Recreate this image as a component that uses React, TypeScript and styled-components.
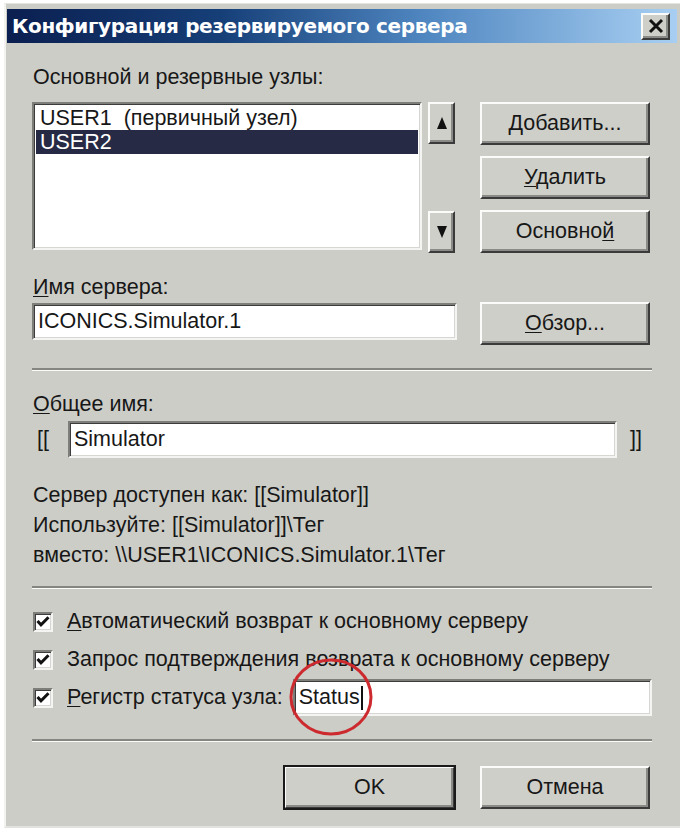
import React from "react";
import styled, { createGlobalStyle, css } from "styled-components";

const FONT = `"Liberation Sans", Arial, sans-serif`;
const TEXT = "21.5px";

const Global = createGlobalStyle`
  html, body { margin: 0; padding: 0; background: #ffffff; }
  body { font-family: ${FONT}; color: #171717; }
  * { box-sizing: border-box; }
`;

const Window = styled.div`
  position: relative;
  margin: 3px 0 0 4px;
  width: 676px;
  height: 825px;
  background: #cdcdc7;
  border-top: 1px solid #e4e4e0;
  border-left: 2px solid #f2f2ef;
  border-bottom: 2px solid #e2e2de;
  padding: 5px 3px 0 1px;
  display: flex;
  flex-direction: column;
`;

const TitleBar = styled.div`
  height: 34px;
  display: flex;
  align-items: center;
  justify-content: space-between;
  padding: 0 7px 0 5px;
  background: linear-gradient(90deg, #0b1f50 0%, #163f78 32%, #4f86c0 62%, #a8cff2 100%);
`;

const Title = styled.span`
  font-family: "DejaVu Sans", Verdana, sans-serif;
  font-weight: bold;
  font-size: 20px;
  color: #ffffff;
  letter-spacing: -0.35px;
  white-space: nowrap;
`;

const raised = css`
  background: #cfcfc9;
  border-style: solid;
  border-width: 2px;
  border-color: #fbfbf9 #3b3b3b #3b3b3b #fbfbf9;
  box-shadow: inset -2px -2px 0 #8a8a86;
`;

const sunken = css`
  background: #ffffff;
  border-style: solid;
  border-width: 2px;
  border-color: #7d7d7a #f4f4f2 #f4f4f2 #7d7d7a;
  box-shadow: inset 1px 1px 0 #3c3c3c, inset -1px -1px 0 #d6d6d2;
`;

const CloseButton = styled.div`
  ${raised};
  width: 29px;
  height: 27px;
  display: flex;
  align-items: center;
  justify-content: center;
`;

const Body = styled.div`
  display: flex;
  flex-direction: column;
  padding: 0 25px;
`;

const Label = styled.div<{ $mt: number }>`
  margin-top: ${(p) => p.$mt}px;
  height: 22px;
  line-height: 22px;
  font-size: ${TEXT};
  white-space: nowrap;
  padding-left: 1px;
`;

const U = styled.span`
  text-decoration: underline;
  text-underline-offset: 2px;
  text-decoration-thickness: 1px;
`;

const ListRow = styled.div`
  margin-top: 14px;
  height: 151px;
  display: flex;
  align-items: flex-start;
`;

const ListBox = styled.div`
  ${sunken};
  width: 390px;
  height: 148px;
  padding: 2px 2px;
  display: flex;
  flex-direction: column;
`;

const ListItem = styled.div<{ $selected?: boolean }>`
  height: 24px;
  line-height: 24px;
  font-size: ${TEXT};
  padding-left: 4px;
  white-space: nowrap;
  color: ${(p) => (p.$selected ? "#ffffff" : "#171717")};
  background: ${(p) => (p.$selected ? "#262a45" : "transparent")};
`;

const ScrollColumn = styled.div`
  margin-left: 6px;
  height: 151px;
  width: 27px;
  display: flex;
  flex-direction: column;
  justify-content: space-between;
`;

const ScrollButton = styled.div`
  ${raised};
  width: 27px;
  height: 42px;
  display: flex;
  align-items: center;
  justify-content: center;
`;

const ButtonColumn = styled.div`
  margin-left: 25px;
  height: 151px;
  display: flex;
  flex-direction: column;
  justify-content: space-between;
`;

const Button = styled.div<{ $default?: boolean; $w?: number; $ml?: number }>`
  ${raised};
  width: ${(p) => p.$w ?? 170}px;
  height: 43px;
  margin-left: ${(p) => p.$ml ?? 0}px;
  display: flex;
  align-items: center;
  justify-content: center;
  font-size: ${TEXT};
  white-space: nowrap;
  ${(p) =>
    p.$default &&
    css`
      outline: 2px solid #1a1a1a;
      outline-offset: -1px;
    `}
`;

const Row = styled.div<{ $mt: number; $h: number }>`
  margin-top: ${(p) => p.$mt}px;
  height: ${(p) => p.$h}px;
  display: flex;
  align-items: flex-start;
`;

const TextField = styled.div<{ $w?: number; $mt?: number; $ml?: number }>`
  ${sunken};
  ${(p) => (p.$w ? `width: ${p.$w}px;` : "flex: 1;")}
  height: 37px;
  margin-top: ${(p) => p.$mt ?? 0}px;
  margin-left: ${(p) => p.$ml ?? 0}px;
  padding-left: 4px;
  display: flex;
  align-items: center;
  font-size: ${TEXT};
  white-space: nowrap;
`;

const Separator = styled.div<{ $mt: number }>`
  margin-top: ${(p) => p.$mt}px;
  height: 3px;
  border-top: 2px solid #858582;
  border-bottom: 1px solid #fbfbf9;
`;

const Bracket = styled.span<{ $ml: number; $w: number }>`
  margin-left: ${(p) => p.$ml}px;
  width: ${(p) => p.$w}px;
  height: 37px;
  line-height: 37px;
  font-size: ${TEXT};
`;

const Info = styled.div`
  margin-top: 22px;
  display: flex;
  flex-direction: column;
`;

const InfoLine = styled.div`
  height: 30px;
  line-height: 30px;
  font-size: ${TEXT};
  white-space: nowrap;
  padding-left: 1px;
`;

const CheckRow = styled.div<{ $mt: number }>`
  margin-top: ${(p) => p.$mt}px;
  height: 37px;
  display: flex;
  align-items: center;
`;

const CheckBox = styled.div`
  ${sunken};
  margin-left: 1px;
  width: 20px;
  height: 20px;
  display: flex;
  align-items: center;
  justify-content: center;
`;

const CheckLabel = styled.span`
  margin-left: 14px;
  font-size: ${TEXT};
  white-space: nowrap;
`;

const Caret = styled.span`
  display: inline-block;
  width: 2px;
  height: 24px;
  margin-left: 1px;
  background: #111;
`;

const ButtonRow = styled.div`
  margin-top: 24px;
  display: flex;
  justify-content: flex-end;
  gap: 25px;
  padding-right: 2px;
`;

const Annotation = styled.svg`
  position: absolute;
  left: 274px;
  top: 648px;
  width: 110px;
  height: 90px;
  pointer-events: none;
`;

const Check = () => (
  <svg width="14" height="14" viewBox="0 0 14 14">
    <path d="M1.5 6 L5 9.8 L12.5 2.3" fill="none" stroke="#111" strokeWidth="3" />
  </svg>
);

const ArrowUp = () => (
  <svg width="12" height="14" viewBox="0 0 12 14">
    <path d="M6 1 L11 13 L1 13 Z" fill="#111" />
  </svg>
);

const ArrowDown = () => (
  <svg width="12" height="14" viewBox="0 0 12 14">
    <path d="M1 1 L11 1 L6 13 Z" fill="#111" />
  </svg>
);

const CloseIcon = () => (
  <svg width="16" height="16" viewBox="0 0 16 16">
    <path d="M2 2 L14 14 M14 2 L2 14" stroke="#111" strokeWidth="3" />
  </svg>
);

export default function App() {
  return (
    <>
      <Global />
      <Window>
        <TitleBar>
          <Title>Конфигурация резервируемого сервера</Title>
          <CloseButton>
            <CloseIcon />
          </CloseButton>
        </TitleBar>
        <Body>
          <Label $mt={23}>Основной и резервные узлы:</Label>
          <ListRow>
            <ListBox>
              <ListItem>USER1&nbsp; (первичный узел)</ListItem>
              <ListItem $selected>USER2</ListItem>
            </ListBox>
            <ScrollColumn>
              <ScrollButton>
                <ArrowUp />
              </ScrollButton>
              <ScrollButton>
                <ArrowDown />
              </ScrollButton>
            </ScrollColumn>
            <ButtonColumn>
              <Button>
                <span>
                  <U>Д</U>обавить...
                </span>
              </Button>
              <Button>
                <span>
                  <U>У</U>далить
                </span>
              </Button>
              <Button>
                <span>
                  Основно<U>й</U>
                </span>
              </Button>
            </ButtonColumn>
          </ListRow>

          <Label $mt={23}>
            <U>И</U>мя сервера:
          </Label>
          <Row $mt={4} $h={43}>
            <TextField $w={425} $mt={1}>
              ICONICS.Simulator.1
            </TextField>
            <Button $ml={23}>
              <span>
                <U>О</U>бзор...
              </span>
            </Button>
          </Row>

          <Separator $mt={23} />

          <Label $mt={22}>
            <U>О</U>бщее имя:
          </Label>
          <Row $mt={6} $h={37}>
            <Bracket $ml={5} $w={31}>[[</Bracket>
            <TextField $w={549}>Simulator</TextField>
            <Bracket $ml={13} $w={20}>]]</Bracket>
          </Row>

          <Info>
            <InfoLine>Сервер доступен как: [[Simulator]]</InfoLine>
            <InfoLine>Используйте: [[Simulator]]\Тег</InfoLine>
            <InfoLine>вместо: \\USER1\ICONICS.Simulator.1\Тег</InfoLine>
          </Info>

          <Separator $mt={16} />

          <CheckRow $mt={14}>
            <CheckBox>
              <Check />
            </CheckBox>
            <CheckLabel>
              <U>А</U>втоматический возврат к основному серверу
            </CheckLabel>
          </CheckRow>
          <CheckRow $mt={1}>
            <CheckBox>
              <Check />
            </CheckBox>
            <CheckLabel>Запрос подтверждения возврата к основному серверу</CheckLabel>
          </CheckRow>
          <CheckRow $mt={1}>
            <CheckBox>
              <Check />
            </CheckBox>
            <CheckLabel>
              <U>Р</U>егистр статуса узла:
            </CheckLabel>
            <TextField $ml={10}>
              Status
              <Caret />
            </TextField>
          </CheckRow>

          <Separator $mt={23} />

          <ButtonRow>
            <Button $default $w={171}>
              OK
            </Button>
            <Button>Отмена</Button>
          </ButtonRow>
        </Body>
        <Annotation viewBox="0 0 110 90">
          <ellipse cx="51" cy="45" rx="40" ry="37" fill="none" stroke="#cc2a2e" strokeWidth="3" />
        </Annotation>
      </Window>
    </>
  );
}
